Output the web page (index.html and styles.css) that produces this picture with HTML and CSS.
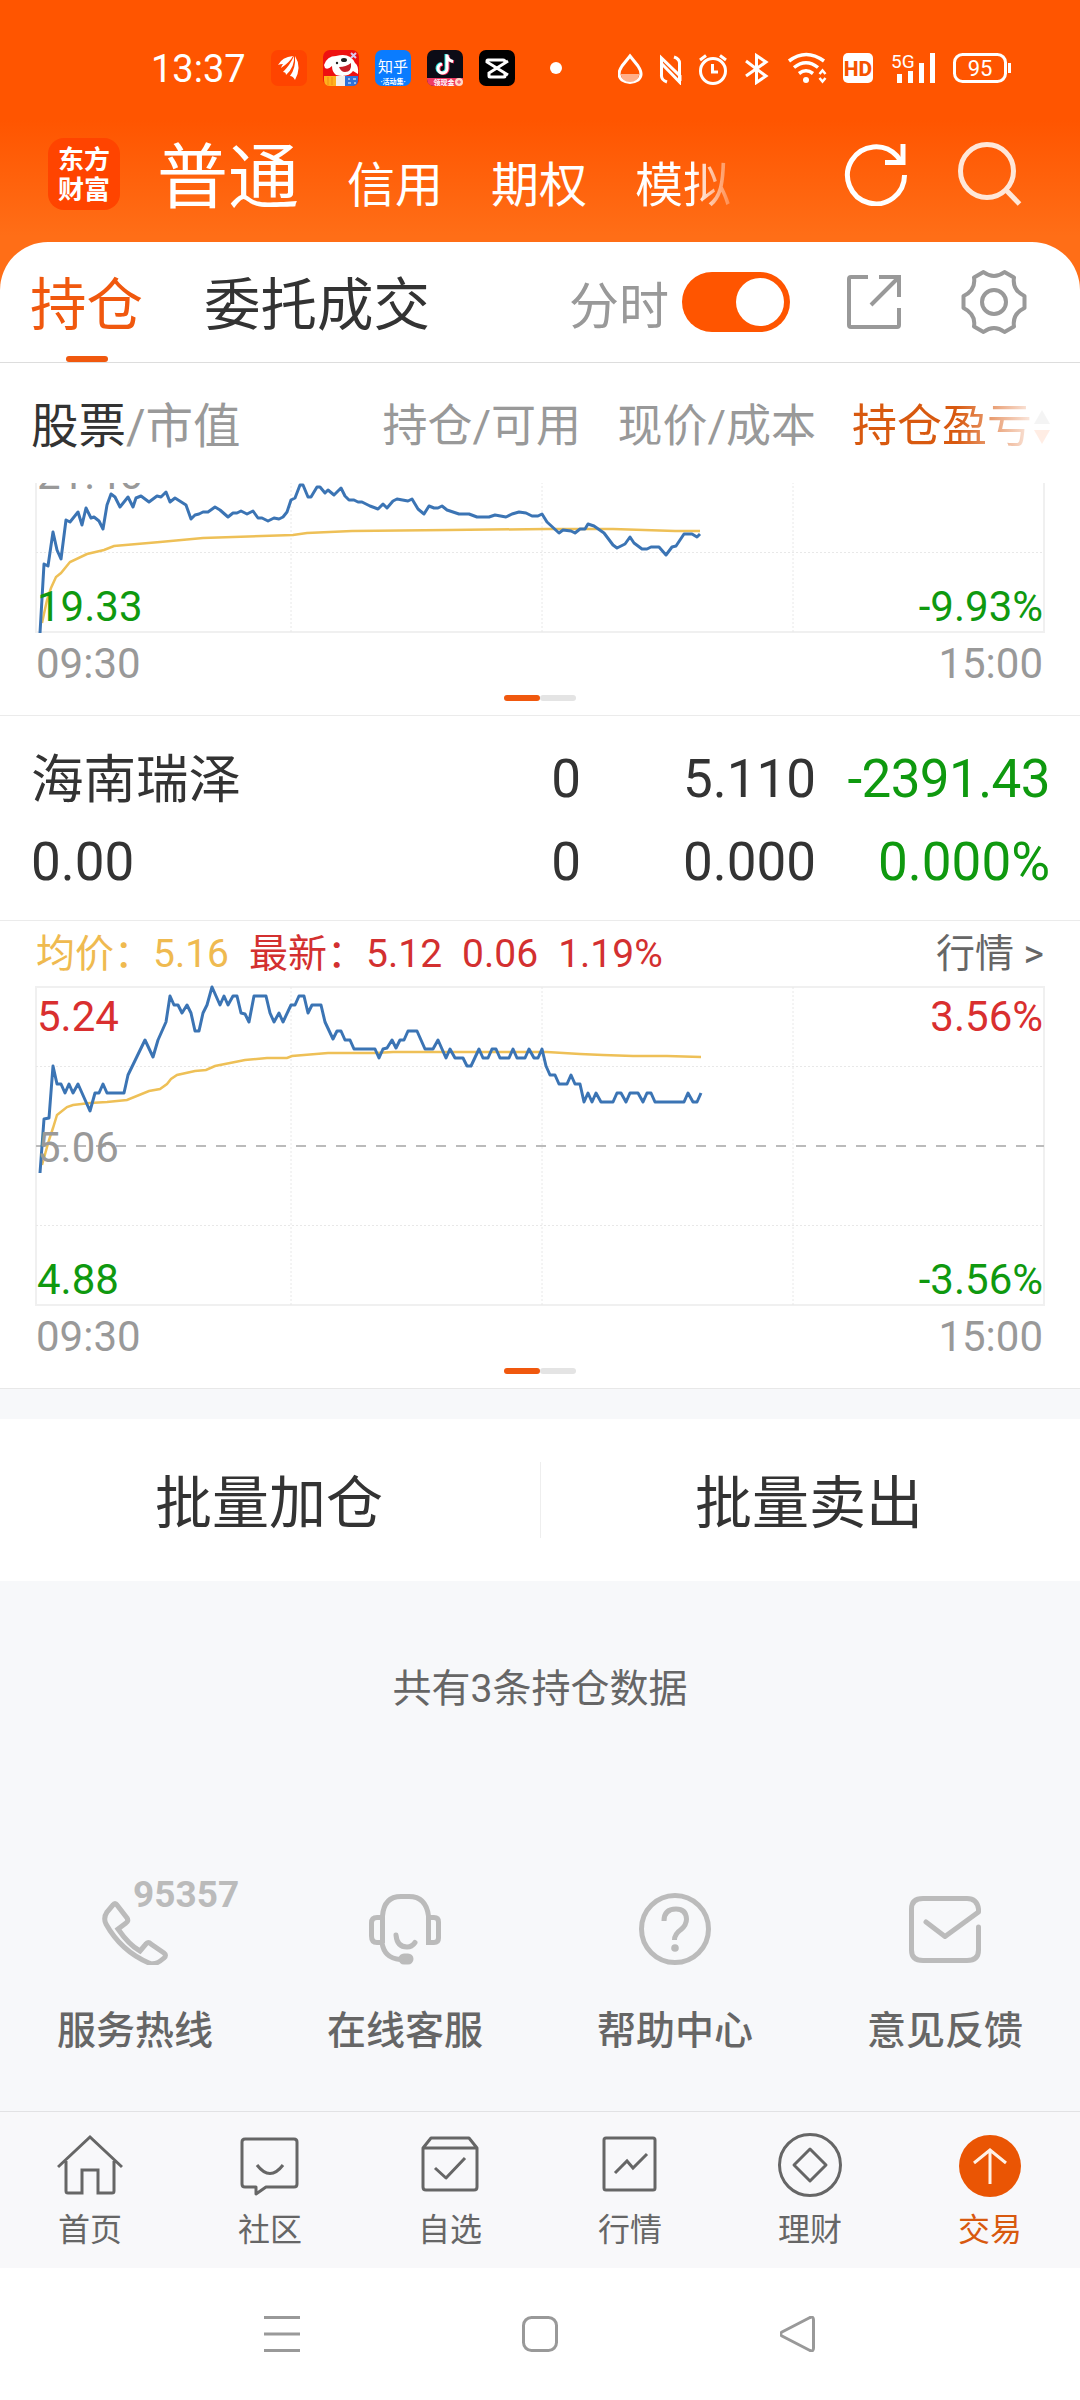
FILE: index.html
```html
<!DOCTYPE html>
<html lang="zh-CN">
<head>
    <meta charset="UTF-8">
    <title>持仓</title>
    <meta name="viewport" content="width=device-width, initial-scale=1.0">
    <link rel="stylesheet" href="styles.css">
</head>
<body>
    <header class="header">
        <div class="status-bar">
            <span class="clock">13:37</span>
            <div class="notifications">
                <svg width="36" height="36" viewBox="0 0 36 36">
                    <rect width="36" height="36" rx="7" fill="#ff4400"/>
                    <path d="M7 15Q11 7 22 6Q19 12 10 18Q11 15 12 14Q9 14 7 15ZM12 22Q19 15 23 6Q24 17 15 25Q15 22 12 22ZM19 26Q25 18 24 6Q31 17 24 30Q22 26 19 26Z" fill="#fff"/>
                </svg>
                <svg width="36" height="36" viewBox="0 0 36 36">
                    <rect width="36" height="36" rx="7" fill="#ee1111"/>
                    <path d="M1 15Q4 6 13 6Q27 2 32 13Q36 16 35 24L30 21Q25 28 13 25Q9 22 9 16Q5 20 2 18Z" fill="#fff"/>
                    <path d="M16 17Q23 17 28 13Q29 22 22 22Q18 22 16 17Z" fill="#c61e26"/>
                    <ellipse cx="21" cy="10" rx="3" ry="2" fill="#222"/>
                    <circle cx="14" cy="13" r="1.2" fill="#222"/>
                    <path d="M28 3L33 8M33 3L28 8" stroke="#d8c8ef" stroke-width="2"/>
                    <path d="M1 26H13V36H7Q1 36 1 30Z" fill="#ffb21c"/>
                    <path d="M13 26H22V36H13Z" fill="#f3efe8"/>
                    <path d="M22 26H35V30Q35 36 29 36H22Z" fill="#2f72d8"/>
                    <path d="M5 27V35M9 27V35" stroke="#f38b12"/>
                    <path d="M25 29H27M25 33H28M30 29H33M31 33H33" stroke="#fff"/>
                </svg>
                <svg width="36" height="36" viewBox="0 0 36 36">
                    <rect width="36" height="36" rx="7" fill="#0a7cff"/>
                    <text x="18" y="22" class="app-name">知乎</text>
                    <text x="18" y="34" class="app-tag">·活动集·</text>
                </svg>
                <svg width="36" height="36" viewBox="0 0 36 36">
                    <rect width="36" height="36" rx="7" fill="#0c0c16"/>
                    <path d="M19 4V18A4.500 4.500 0 1 1 14 13.500M19 6Q20 10 25 11" fill="none" stroke="#25e5e0" stroke-width="3"/>
                    <path d="M21 5V19A4.500 4.500 0 1 1 16 14.500M21 7Q22 11 27 12" fill="none" stroke="#f5315c" stroke-width="3"/>
                    <path d="M20 4.500V18.500A4.500 4.500 0 1 1 15 14M20 6Q21 10.500 26 11.500" fill="none" stroke="#fff" stroke-width="3"/>
                    <path d="M0 28H36V29Q36 36 29 36H7Q0 36 0 29Z" fill="#ef3c64"/>
                    <text x="17" y="35" class="app-tag">领现金</text>
                    <circle cx="32" cy="32" r="4" fill="#ffd9c7"/>
                    <path d="M30 32H34M32 30V34" stroke="#ef3c64"/>
                </svg>
                <svg width="36" height="36" viewBox="0 0 36 36">
                    <rect width="36" height="36" rx="7" fill="#000"/>
                    <path d="M29 11L10 23V26Q10 27 11 27H25Q26 27 26 26V24M29 25L8 12V11Q8 10 9 10H24Q26 10 26 12" fill="none" stroke="#fff" stroke-width="3"/>
                </svg>
            </div>
            <span class="more-dot"></span>
            <svg class="system-icons" width="394" height="34" viewBox="618 51 394 34" fill="none" stroke="#fff" stroke-width="3">
                <path d="M630 56L622 66Q616 75 622 80Q630 85 638 80Q644 75 638 66Z"/>
                <path d="M620.500 74H639.500Q638 82 630 82Q622 82 620.500 74Z" fill="#ffb08a" stroke="none"/>
                <path d="M667 82Q661 80 661.500 75V58L680 76V81M674 57Q680 59 679.500 64V82L661 63"/>
                <circle cx="713" cy="71" r="12.500"/>
                <path d="M712.500 64V72H718M700 60L706 55.500M726 60L720 55.500"/>
                <path d="M746 61L766 76L756.500 82.500V55.500L766 62L746 76"/>
                <path d="M789 61Q806 48 824 61M794 67.500Q806 58 818 67.500M799 73.500Q806 68 813 73.500" stroke-width="3.500"/>
                <circle cx="806" cy="80" r="3" fill="#fff" stroke="none"/>
                <path d="M819.500 74L822.500 70.500L825.500 74M819.500 78L822.500 81.500L825.500 78" stroke-width="2.500"/>
                <rect x="843" y="53" width="30" height="30" rx="5" fill="#fff" stroke="none"/>
                <text x="858" y="75.500" class="hd">HD</text>
                <text x="891" y="67.500" class="net">5G</text>
                <path d="M899.500 74V83M910.500 71V83M921.500 63V83M932.500 53V83" stroke-width="5"/>
                <rect x="954.500" y="54.500" width="51" height="27" rx="8"/>
                <path d="M1009.500 63V73"/>
                <text x="980" y="76" class="battery">95</text>
            </svg>
        </div>
        <div class="account-bar">
            <div class="logo">东方<br>财富</div>
            <nav class="accounts">
                <span class="current">普通</span>
                <span>信用</span>
                <span>期权</span>
                <span class="faded">模拟</span>
            </nav>
            <svg class="refresh" width="64" height="64" viewBox="0 0 64 64" fill="none" stroke="#fff" stroke-width="5">
                <path d="M60.500 33A28.500 28.500 0 1 1 53 14L58 20.500"/>
                <path d="M59 2V20.500H41"/>
            </svg>
            <svg width="64" height="64" viewBox="0 0 64 64" fill="none" stroke="#ffe7d8" stroke-width="5">
                <circle cx="29" cy="29" r="26.500"/>
                <path d="M48 48L61.500 62"/>
            </svg>
        </div>
    </header>

    <main class="panel">
        <div class="tabs">
            <span class="tab active">持仓</span>
            <span class="tab">委托成交</span>
            <span class="switch-label">分时</span>
            <span class="switch"></span>
            <svg class="share" width="56" height="56" viewBox="0 0 56 56" fill="none" stroke="#999" stroke-width="4">
                <path d="M22 3H5Q3 3 3 5V51Q3 53 5 53H51Q53 53 53 51V34M33 3H53V23M53 3L25 31"/>
            </svg>
            <svg width="66" height="66" viewBox="0 0 66 66" fill="none" stroke="#999" stroke-width="4" stroke-linejoin="round">
                <path d="M22.500 3Q33 11 43.500 3L53 8.500Q51 21 63.500 27V39Q51 45 53 57.500L43.500 63Q33 55 22.500 63L13 57.500Q15 45 2.500 39V27Q15 21 13 8.500Z"/>
                <circle cx="33" cy="33" r="12"/>
            </svg>
        </div>

        <div class="columns table-head">
            <span class="name-head"><b>股票</b>/市值</span>
            <span>持仓/可用</span>
            <span>现价/成本</span>
            <span class="sorted">持仓盈亏<svg width="16" height="34" viewBox="0 0 16 34"><path d="M8 0L16 14H0Z" fill="#999"/><path d="M0 20H16L8 34Z" fill="#ff5500"/></svg></span>
        </div>

        <div class="holdings">
            <section class="chart-card">
                <svg class="chart" width="1008" height="319" viewBox="0 0 1008 319">
                    <rect class="frame" x="0" y="0" width="1008" height="318"/>
                    <path class="grid" d="M255 0V318M506 0V318M757 0V318M0 79.500H1008M0 238.500H1008"/>
                    <path class="average" d="M6 309L11 286L15 274L20 263L25 259L34 248L51 240L68 236L78 232L124 228L167 224L257 221L271 219L316 217L412 216L511 215L577 215L639 217L664 217"/>
                    <path class="price" d="M4 319L8 250L12 252L17 218L21 236L25 245L30 206L34 208L42 198L46 211L50 194L55 204L58 203L63 207L67 215L71 191L75 180L79 183L84 193L92 183L97 193L100 184L105 182L113 188L121 182L125 183L130 178L134 188L139 184L150 191L155 205L159 201L163 200L167 198L172 198L179 193L184 196L192 203L197 199L201 199L205 197L211 200L217 197L222 204L226 204L232 207L238 204L243 205L247 203L251 198L255 186L259 184L264 171L267 171L272 183L275 183L281 173L284 173L289 179L292 176L298 181L305 174L309 182L313 186L318 186L322 188L326 188L334 192L342 195L347 190L351 194L357 187L361 185L372 187L376 185L382 195L388 200L393 192L398 194L402 194L406 192L411 196L423 200L433 200L441 203L453 203L459 201L470 203L476 200L483 198L490 199L496 202L502 202L506 200L511 208L523 219L527 216L535 217L539 219L544 215L549 215L552 210L558 212L568 219L577 231L581 234L589 230L594 223L598 229L606 235L611 235L615 233L623 233L630 241L636 233L640 232L648 220L656 220L661 223L664 220"/>
                    <text class="mid" x="1" y="175">21.46</text>
                    <text class="low" x="1" y="307">19.33</text>
                    <text class="low right" x="1007" y="307">-9.93%</text>
                </svg>
                <div class="axis"><span>09:30</span><span>15:00</span></div>
                <div class="pager"><i class="on"></i><i></i></div>
            </section>

            <section class="columns stock">
                <span class="stock-name">海南瑞泽</span>
                <span>0</span>
                <span>5.110</span>
                <span class="loss amount">-2391.43</span>
                <span>0.00</span>
                <span>0</span>
                <span>0.000</span>
                <span class="loss">0.000%</span>
            </section>

            <section class="chart-card">
                <div class="quote">
                    <span class="avg">均价：5.16</span>
                    <span class="last">最新：5.12</span>
                    <span class="last">0.06</span>
                    <span class="last">1.19%</span>
                    <span class="more">行情 &gt;</span>
                </div>
                <svg class="chart" width="1008" height="319" viewBox="0 0 1008 319">
                    <rect class="frame" x="0" y="0" width="1008" height="318"/>
                    <path class="grid" d="M255 0V318M506 0V318M757 0V318M0 79.500H1008M0 238.500H1008"/>
                    <path class="close" d="M0 159H1008"/>
                    <path class="average" d="M6 178L13 153L17 141L21 128L31 120L37 118L54 116L71 115L91 113L113 104L124 102L131 97L135 92L141 88L159 84L170 83L179 79L209 73L231 71L251 71L256 69L292 66L339 66L357 65L511 65L544 67L567 68L597 69L631 69L665 70"/>
                    <path class="price" d="M4 186L8 132L13 131L17 79L21 97L25 97L29 106L33 97L37 106L42 97L46 106L54 124L59 106L63 106L67 97L71 106L88 106L92 88L109 53L117 70L122 53L130 35L134 9L138 18L142 18L146 26L151 18L155 26L159 44L163 44L167 26L171 18L176 0L184 18L188 9L192 18L197 9L201 9L205 26L209 27L213 35L218 9L230 9L234 26L238 35L243 26L247 35L255 18L259 18L263 9L268 9L272 26L276 18L285 18L289 35L297 52L301 44L305 44L309 53L314 53L318 62L339 62L343 71L347 62L351 61L356 53L360 61L364 53L368 53L372 44L381 44L389 62L397 62L402 53L410 71L414 62L419 71L427 71L431 79L435 79L443 62L447 71L452 71L456 62L460 62L464 71L473 71L477 62L481 71L489 71L493 62L498 71L502 71L506 62L510 79L514 88L519 88L523 97L531 97L535 88L539 97L544 97L548 115L552 106L556 115L560 106L565 115L577 115L581 106L585 106L590 115L594 106L602 106L607 115L611 106L615 106L619 115L648 115L652 106L657 115L661 115L665 106"/>
                    <text class="high" x="1" y="44">5.24</text>
                    <text class="high right" x="1007" y="44">3.56%</text>
                    <text class="mid" x="1" y="175">5.06</text>
                    <text class="low" x="1" y="307">4.88</text>
                    <text class="low right" x="1007" y="307">-3.56%</text>
                </svg>
                <div class="axis"><span>09:30</span><span>15:00</span></div>
                <div class="pager"><i class="on"></i><i></i></div>
            </section>
        </div>
    </main>

    <div class="batch">
        <button>批量加仓</button>
        <button>批量卖出</button>
    </div>

    <p class="summary">共有3条持仓数据</p>

    <div class="services">
        <div class="service">
            <svg width="72" height="72" viewBox="0 0 72 72">
                <path d="M14 12Q16 9 18 12L28 25Q30 28 27 30L19 36Q30 52 41 58L47 51Q49 48 52 51L65 60Q68 62 65 65Q56 73 50 70Q22 58 7 31Q4 25 8 19Z"/>
            </svg>
            <em class="hotline">95357</em>
            <span>服务热线</span>
        </div>
        <div class="service">
            <svg width="72" height="72" viewBox="0 0 72 72">
                <path d="M13.500 50V23Q15 3.500 32 3.500H40Q57 3.500 59.500 23V49.500H65Q69.500 49.500 69.500 45V29Q69.500 24.500 65 24.500H59M13 24.500H8Q2.500 24.500 2.500 30V43Q2.500 49.500 8 49.500H13Q15 65 31 66.500"/>
                <path d="M27 42Q28 54 38 54Q43 54 46 49.500" stroke-linecap="round"/>
                <rect x="32" y="63" width="10" height="6" rx="3" class="solid"/>
            </svg>
            <span>在线客服</span>
        </div>
        <div class="service">
            <svg width="72" height="72" viewBox="0 0 72 72">
                <circle cx="36" cy="36" r="33.500"/>
                <path d="M25 28Q25 16 37 16Q47 16 47.500 26Q47.500 32 42 36.500Q35.500 41 35.500 47"/>
                <circle cx="36" cy="55" r="3.800" class="dot"/>
            </svg>
            <span>帮助中心</span>
        </div>
        <div class="service">
            <svg width="72" height="72" viewBox="0 0 72 72">
                <path d="M17 29L36 43.500L69.500 19V16Q68 5.500 58 5.500H14Q2.500 5.500 2.500 16V57Q2.500 67.500 14 67.500H58Q69.500 67.500 69.500 57V34" stroke-linecap="round" stroke-linejoin="round"/>
            </svg>
            <span>意见反馈</span>
        </div>
    </div>

    <nav class="tab-bar">
        <a class="item">
            <svg width="66" height="66" viewBox="0 0 66 66">
                <path d="M1 35L33 5L65 35M9 29V59Q9 61 11 61H25V38H41V61H55Q57 61 57 59V29"/>
            </svg>
            <span>首页</span>
        </a>
        <a class="item">
            <svg width="66" height="66" viewBox="0 0 66 66">
                <path d="M8 7H57Q60 7 60 10V52Q60 55 57 55H29L19 62V55H8Q5 55 5 52V10Q5 7 8 7ZM20 33Q33 50 46 33" stroke-linejoin="round"/>
            </svg>
            <span>社区</span>
        </a>
        <a class="item">
            <svg width="66" height="66" viewBox="0 0 66 66">
                <path d="M6 16L14 6H52L60 16V55Q60 58 57 58H9Q6 58 6 55ZM6 16H60M18 36L29 46L48 26" stroke-linejoin="round"/>
            </svg>
            <span>自选</span>
        </a>
        <a class="item">
            <svg width="66" height="66" viewBox="0 0 66 66">
                <rect x="7" y="6" width="51" height="52" rx="2"/>
                <path d="M18 41L30 29L36 36L50 22"/>
            </svg>
            <span>行情</span>
        </a>
        <a class="item">
            <svg width="66" height="66" viewBox="0 0 66 66">
                <circle cx="33" cy="33" r="30.500"/>
                <path d="M33 17L49 33L33 49L17 33Z" stroke-linejoin="round"/>
            </svg>
            <span>理财</span>
        </a>
        <a class="item active">
            <svg width="66" height="66" viewBox="0 0 66 66">
                <circle cx="33" cy="34" r="31" class="disc"/>
                <path d="M33 52V19M17 31L33 18L49 31" class="arrow"/>
            </svg>
            <span>交易</span>
        </a>
    </nav>

    <div class="system-nav">
        <svg width="36" height="36" viewBox="0 0 36 36"><path d="M0 1.500H36M0 18H36M0 34.500H36"/></svg>
        <svg width="36" height="36" viewBox="0 0 36 36"><rect x="1.500" y="1.500" width="33" height="33" rx="8"/></svg>
        <svg width="36" height="36" viewBox="0 0 36 36"><path d="M30 1.500Q33.500 0 33.500 4V32Q33.500 36 30 34.500L2 20Q-1 18 2 16Z"/></svg>
    </div>
</body>
</html>
```
FILE: styles.css
```css
* {
    box-sizing: border-box;
}

body {
    margin: 0;
    width: 1080px;
    height: 2400px;
    display: flex;
    flex-direction: column;
    background: #f7f8fa;
    color: #333;
    font-family: Roboto, 'Noto Sans CJK SC', sans-serif;
    overflow: hidden;
}

svg {
    display: block;
    flex: none;
}

/* orange header */
.header {
    height: 290px;
    margin-bottom: -48px;
    background: linear-gradient(#ff5500 120px, #ff6e17 236px);
    color: #fff;
}

.status-bar {
    height: 136px;
    display: flex;
    align-items: center;
    padding-left: 151px;
}

.clock {
    width: 120px;
    padding-top: 2px;
    font-size: 38px;
    line-height: 44px;
}

.notifications {
    display: flex;
    gap: 16px;
}

.app-name {
    font-size: 15px;
    fill: #fff;
    text-anchor: middle;
}

.app-tag {
    font-size: 7px;
    font-weight: 700;
    fill: #fff;
    text-anchor: middle;
}

.more-dot {
    width: 12px;
    height: 12px;
    margin: 0 56px 0 35px;
    border-radius: 50%;
    background: #fff;
}

.system-icons text {
    stroke: none;
    fill: #fff;
}

.system-icons .hd {
    font-size: 21px;
    font-weight: 800;
    fill: #f55400;
    text-anchor: middle;
}

.system-icons .net {
    font-size: 19px;
}

.system-icons .battery {
    font-size: 22px;
    text-anchor: middle;
}

.account-bar {
    height: 76px;
    display: flex;
    align-items: center;
    padding-left: 48px;
}

.logo {
    width: 72px;
    height: 72px;
    padding-top: 7px;
    border-radius: 16px;
    background: #ff4400;
    font-size: 26px;
    font-weight: 700;
    line-height: 30px;
    text-align: center;
}

.accounts {
    display: flex;
    align-items: baseline;
    gap: 48px;
    width: 687px;
    margin-left: 37px;
    padding-top: 16px;
    font-size: 48px;
    line-height: 76px;
}

.accounts .current {
    font-size: 71px;
}

.accounts .faded {
    background: linear-gradient(90deg, #fff 60%, #ff8a4a);
    background-clip: text;
    color: transparent;
}

.refresh {
    margin-right: 50px;
}

/* holdings panel */
.panel {
    border-radius: 48px 48px 0 0;
    background: #fff;
}

.tabs {
    height: 121px;
    display: flex;
    align-items: center;
    padding-left: 30px;
    border-bottom: 1px solid #ddd;
}

.tab {
    position: relative;
    height: 120px;
    margin-right: 61px;
    font-size: 56.500px;
    line-height: 128px;
}

.tab.active {
    color: #f0580e;
}

.tab.active::after {
    content: "";
    position: absolute;
    left: 36px;
    bottom: 0;
    width: 42px;
    height: 6px;
    border-radius: 3px;
    background: #f0580e;
}

.switch-label {
    margin-left: 78px;
    color: #999;
    font-size: 50px;
}

.switch {
    width: 108px;
    height: 60px;
    margin: 0 56px 0 13px;
    padding: 6px;
    border-radius: 30px;
    background: #ff5500;
}

.switch::after {
    content: "";
    display: block;
    width: 48px;
    height: 48px;
    margin-left: auto;
    border-radius: 50%;
    background: #fff;
}

.share {
    margin-right: 59px;
}

.columns {
    display: grid;
    grid-template-columns: 320px 230px 235px 234px;
    padding-left: 31px;
    text-align: right;
    white-space: nowrap;
}

.columns > :nth-child(4n + 1) {
    text-align: left;
}

.table-head {
    height: 120px;
    color: #999;
    font-size: 45px;
    line-height: 128px;
}

.name-head {
    font-size: 47.500px;
}

.name-head b {
    color: #333;
    font-weight: 400;
}

.sorted {
    display: flex;
    align-items: center;
    justify-content: flex-end;
    gap: 2px;
    background: linear-gradient(90deg, #d8590f 60%, #fbe9e0 92%);
    background-clip: text;
    color: transparent;
}

.sorted svg {
    opacity: 0.1;
}

/* scrolled list, the first card is cut by its top edge */
.holdings {
    height: 906px;
    display: flex;
    flex-direction: column;
    justify-content: flex-end;
    overflow: hidden;
    border-bottom: 1px solid #e8e8e8;
}

.chart-card {
    flex: none;
    padding: 0 36px 14px;
}

.chart {
    overflow: visible;
}

.chart path,
.chart rect {
    fill: none;
}

.frame {
    stroke: #f0f0f0;
    stroke-width: 2;
}

.grid {
    stroke: #e8e8e8;
    stroke-width: 1;
    stroke-dasharray: 2 2;
}

.close {
    stroke: #bbb;
    stroke-width: 2;
    stroke-dasharray: 10 10;
}

.average {
    stroke: #eec057;
    stroke-width: 2.500;
}

.price {
    stroke: #3b74b4;
    stroke-width: 3;
    stroke-linejoin: round;
}

.chart text {
    font-size: 42px;
}

.high { fill: #d92f2f; }
.mid { fill: #999; }
.low { fill: #0f990f; }
.right { text-anchor: end; }

.axis {
    display: flex;
    justify-content: space-between;
    height: 62px;
    color: #999;
    font-size: 42px;
    line-height: 62px;
    padding: 0 1px 0 0;
}

.pager {
    display: flex;
    justify-content: center;
}

.pager i {
    width: 36px;
    height: 6px;
    border-radius: 3px;
    background: #e4e4e4;
}

.pager .on {
    background: #f0580e;
}

.stock {
    flex: none;
    height: 206px;
    align-content: start;
    padding-top: 22px;
    border: solid #ebebeb;
    border-width: 1px 0;
    font-size: 53px;
    line-height: 83px;
}

.stock-name {
    padding-top: 1px;
    font-size: 52.500px;
    line-height: 82px;
}

.loss {
    color: #0f990f;
}

.amount {
    letter-spacing: -0.6px;
}

.quote {
    display: flex;
    height: 66px;
    gap: 20px;
    font-size: 39px;
    line-height: 67px;
}

.avg { color: #efba50; }
.last { color: #d33030; }

.more {
    margin-left: auto;
    color: #666;
}

/* batch actions */
.batch {
    display: flex;
    height: 162px;
    margin-top: 30px;
    background: #fff;
}

.batch button {
    flex: 1;
    padding: 0 2px 5px 0;
    border: 0;
    background: none;
    color: #333;
    font: inherit;
    font-size: 57px;
}

.batch button + button {
    background: linear-gradient(#eee, #eee) 0 50% / 1px 76px no-repeat;
}

.summary {
    height: 312px;
    margin: 0;
    padding-top: 78px;
    color: #666;
    font-size: 39px;
    line-height: 60px;
    text-align: center;
}

.services {
    display: flex;
    height: 218px;
}

.service {
    position: relative;
    flex: 1;
    display: flex;
    flex-direction: column;
    align-items: center;
    color: #666;
    font-size: 39px;
    font-weight: 500;
}

.service svg {
    margin-bottom: 38px;
    fill: none;
    stroke: #bbb;
    stroke-width: 5;
}

.service .solid {
    fill: #bbb;
}

.service .dot {
    fill: #bbb;
    stroke: none;
}

.service span {
    line-height: 56px;
}

.hotline {
    position: absolute;
    left: 133px;
    top: -18px;
    color: #bbb;
    font-size: 37px;
    font-style: normal;
    font-weight: 700;
    line-height: 40px;
}

/* bottom navigation */
.tab-bar {
    display: flex;
    height: 157px;
    border-top: 1px solid #e2e2e4;
    background: #f8f8fa;
}

.item {
    flex: 1;
    display: flex;
    flex-direction: column;
    align-items: center;
    padding-top: 20px;
    color: #666;
    font-size: 32px;
}

.item svg {
    fill: none;
    stroke: #666;
    stroke-width: 3;
}

.item span {
    margin-top: 9px;
    line-height: 46px;
}

.item.active {
    color: #d8590f;
}

.item .disc {
    fill: #ea5504;
    stroke: none;
}

.item .arrow {
    stroke: #fff1e6;
}

.system-nav {
    flex: 1;
    display: flex;
    justify-content: center;
    gap: 222px;
    padding-top: 48px;
    background: #fff;
}

.system-nav svg {
    fill: none;
    stroke: #999;
    stroke-width: 3;
}
```
